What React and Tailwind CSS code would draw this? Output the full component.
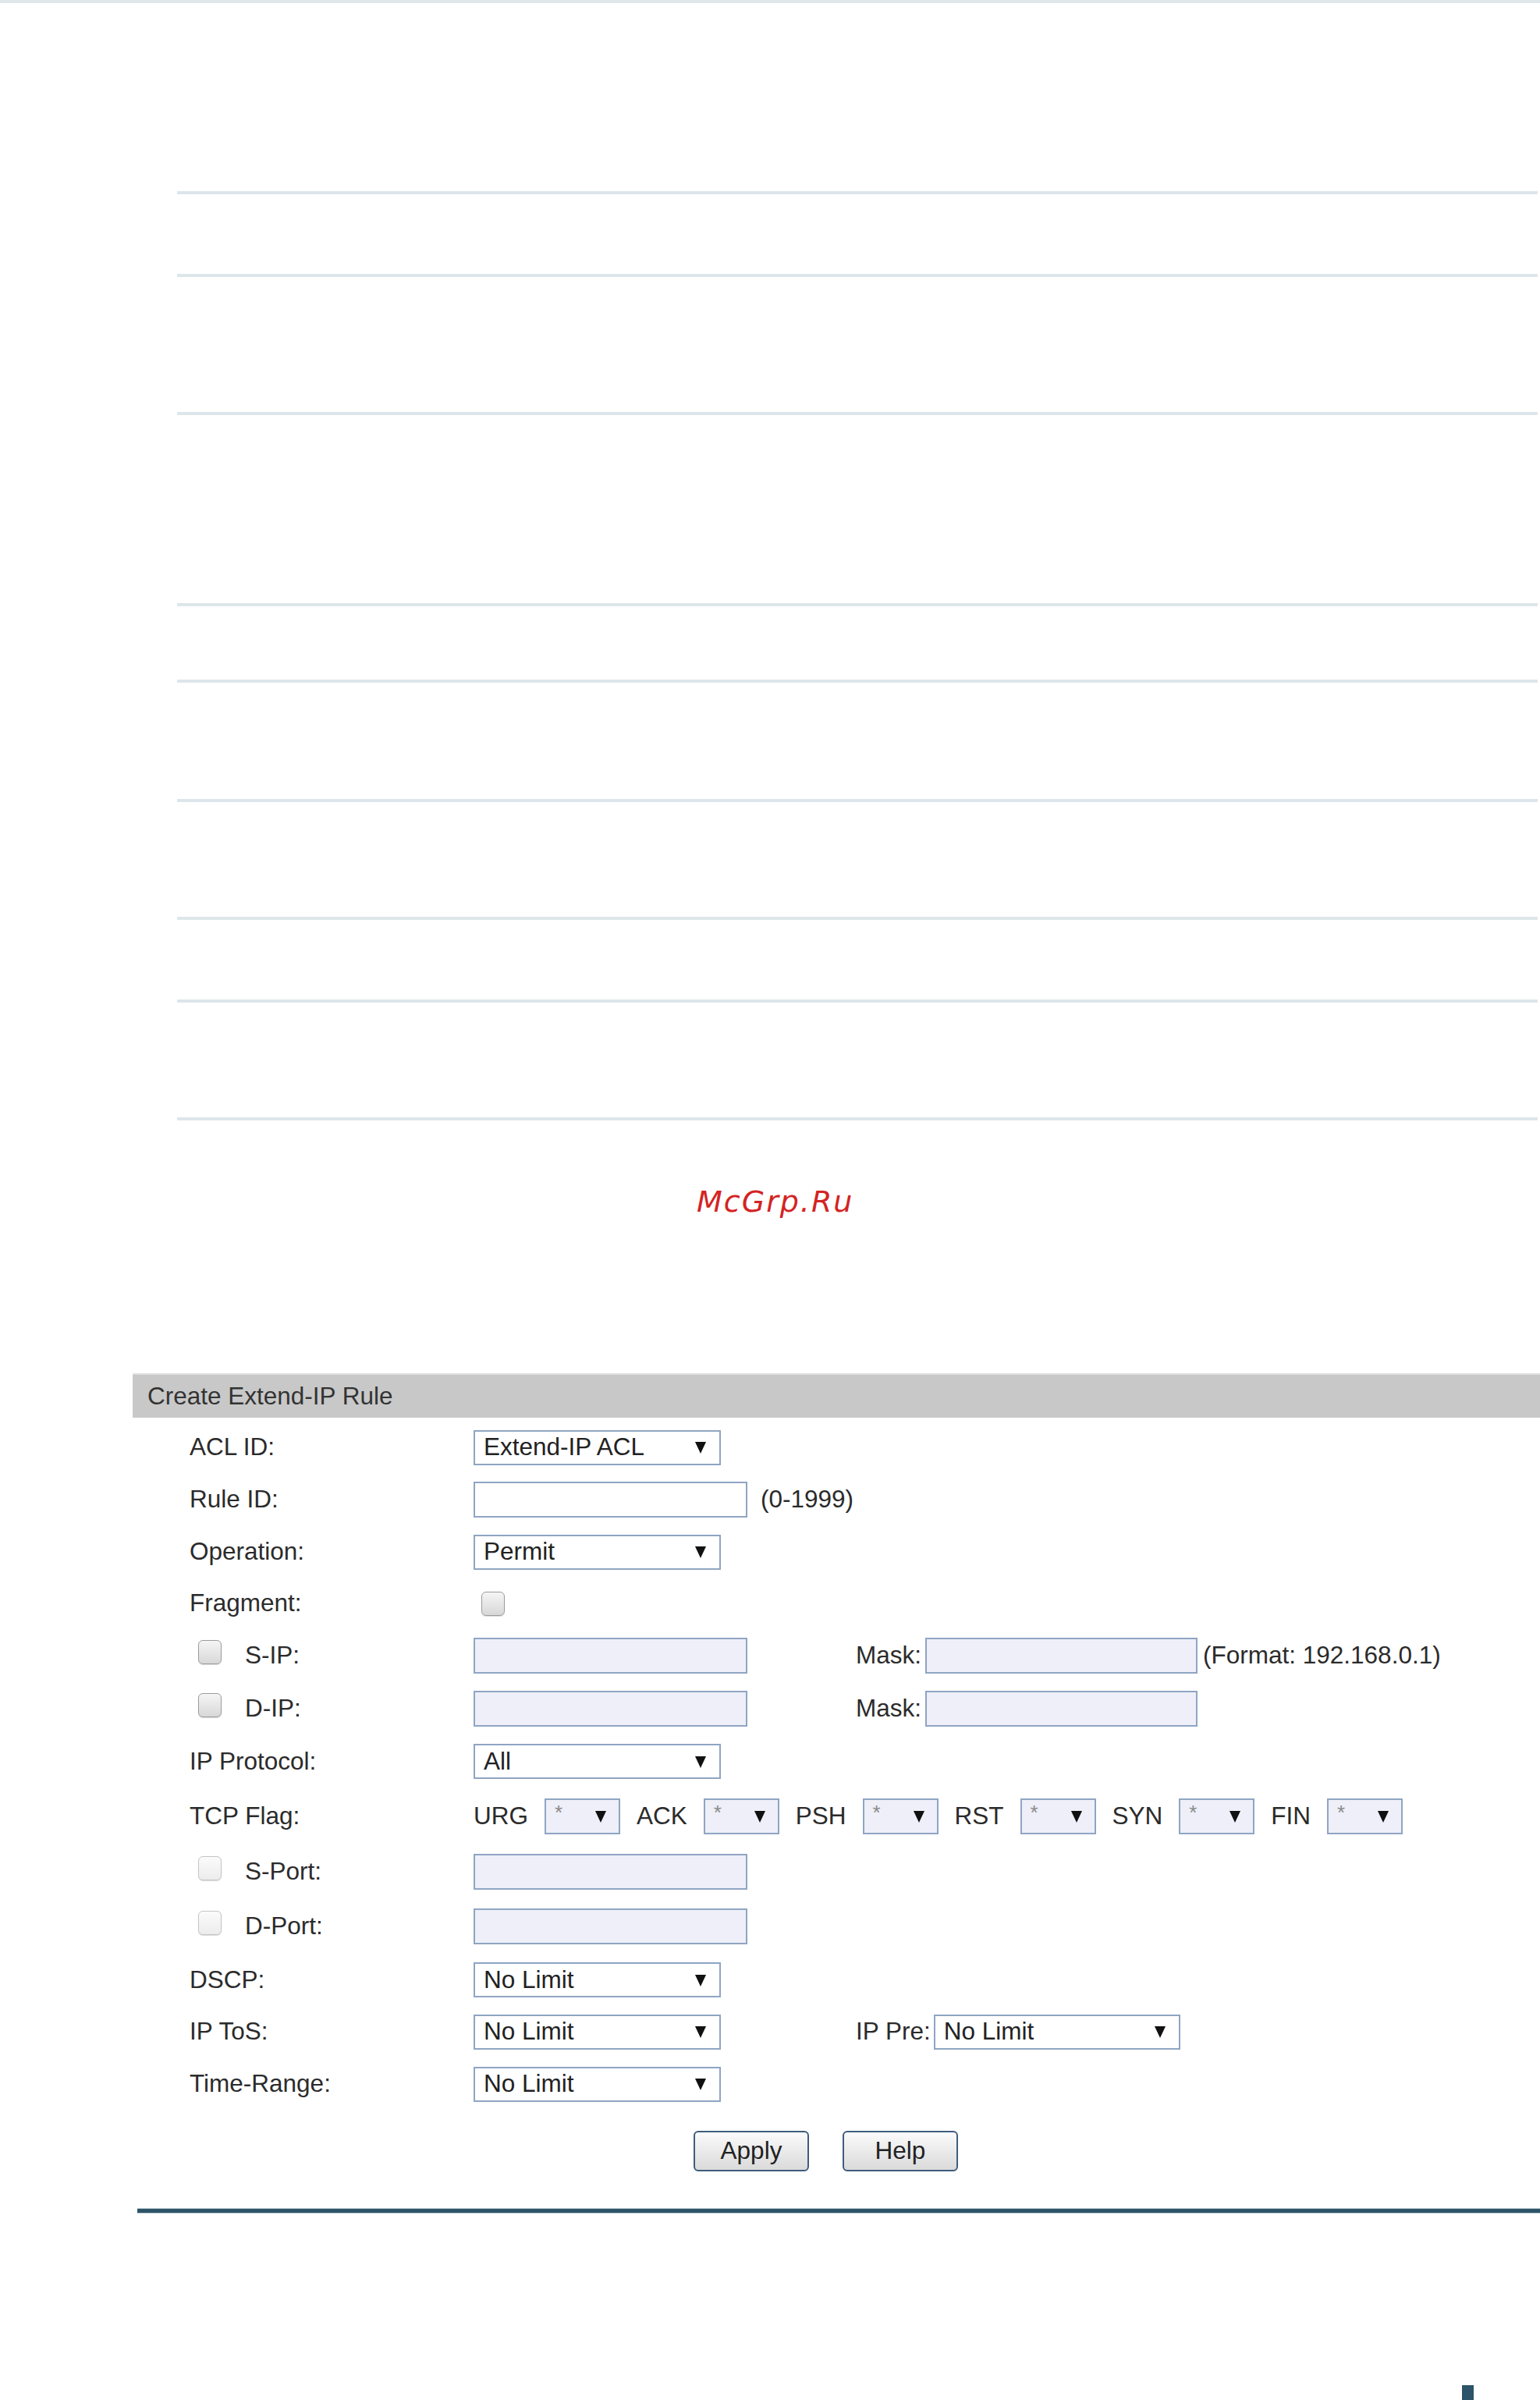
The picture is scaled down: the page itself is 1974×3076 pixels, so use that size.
import React from "react";

const Arrow = () => (
  <svg width="14" height="16" viewBox="0 0 14 16" className="shrink-0">
    <polygon points="0,1 14,1 7,16" fill="#111" />
  </svg>
);

const Select = ({ value, w = "w-[317px]" }) => (
  <div className={`flex items-center justify-between h-[45px] ${w} border-2 border-[#8fa5c3] bg-white pl-[11px] pr-[17px] text-[31.5px] text-[#222] shrink-0`}>
    <span>{value}</span>
    <Arrow />
  </div>
);

const FlagSelect = () => (
  <div className="flex items-center justify-between h-[46px] w-[97px] border-2 border-[#8fa5c3] bg-[#eeeff8] pl-[11px] pr-[16px] shrink-0">
    <span className="text-[26px] text-[#8a8a8a] -mt-[10px]">*</span>
    <Arrow />
  </div>
);

const Input = ({ w = "w-[351px]", bg = "bg-[#eeeff8]" }) => (
  <div className={`h-[46px] ${w} border-2 border-[#8fa5c3] ${bg} shrink-0`} />
);

const Check = ({ light = false, cls = "" }) => (
  <div
    className={`w-[30px] h-[31px] rounded-[6px] border ${light ? "border-[#c4c4c4] from-[#fbfbfb] to-[#ececec]" : "border-[#9c9c9c] from-[#f5f5f5] to-[#d8d8d8]"} bg-linear-to-b shadow-[0_1px_1px_rgba(0,0,0,0.15)] shrink-0 ${cls}`}
  />
);

const Label = ({ children }) => (
  <div className="w-[364px] shrink-0 flex items-center">{children}</div>
);

const CheckLabel = ({ text, light, cls }) => (
  <Label>
    <Check light={light} cls={`ml-[11px] ${cls}`} />
    <span className="ml-[30px]">{text}</span>
  </Label>
);

const Flag = ({ name, first }) => (
  <>
    <span className={first ? "" : "ml-[21px]"}>{name}</span>
    <div className="ml-[21px]">
      <FlagSelect />
    </div>
  </>
);

const Button = ({ children }) => (
  <div className="w-[148px] h-[52px] rounded-[6px] border-2 border-[#3e5d7d] bg-linear-to-b from-[#fbfbfb] to-[#dadada] flex items-center justify-center text-[31.5px] text-[#222]">
    {children}
  </div>
);

const lineTops = [
  "mt-[241px]",
  "mt-[102px]",
  "mt-[173px]",
  "mt-[241px]",
  "mt-[94px]",
  "mt-[149px]",
  "mt-[147px]",
  "mt-[102px]",
  "mt-[147px]",
];

export default function App() {
  return (
    <div className="w-[1974px] h-[3076px] bg-white overflow-hidden font-['Liberation_Sans',Arial,sans-serif] leading-none text-[#2b2b2b]">
      <div className="h-[4px] bg-[#dfe7ea]" />
      {lineTops.map((mt, i) => (
        <div key={i} className={`${mt} ml-[227px] w-[1744px] h-[4px] bg-[#dde6ea]`} />
      ))}

      <div className="mt-[85px] ml-[893px] text-[38px] italic font-['DejaVu_Sans',sans-serif] text-[#d42323] tracking-[2px] leading-none">
        McGrp.Ru
      </div>

      <div className="mt-[201px] ml-[170px]">
        <div className="h-[57px] bg-[#c8c8c8] border-t-2 border-[#e0e0e0] flex items-center pl-[19px] text-[31.5px] text-[#333]">
          Create Extend-IP Rule
        </div>

        <div className="pt-[5px] pl-[73px] text-[31.5px]">
          <div className="flex items-center h-[66px]">
            <Label>ACL ID:</Label>
            <Select value="Extend-IP ACL" />
          </div>
          <div className="flex items-center h-[68px]">
            <Label>Rule ID:</Label>
            <Input bg="bg-white" />
            <span className="ml-[17px]">(0-1999)</span>
          </div>
          <div className="flex items-center h-[66px]">
            <Label>Operation:</Label>
            <Select value="Permit" />
          </div>
          <div className="flex items-center h-[66px]">
            <Label>Fragment:</Label>
            <Check cls="ml-[10px]" />
          </div>
          <div className="flex items-center h-[67px]">
            <CheckLabel text="S-IP:" cls="mb-[8px]" />
            <div className="w-[490px] shrink-0">
              <Input />
            </div>
            <span>Mask:</span>
            <div className="ml-[5px]">
              <Input w="w-[349px]" />
            </div>
            <span className="ml-[7px]">(Format: 192.168.0.1)</span>
          </div>
          <div className="flex items-center h-[69px]">
            <CheckLabel text="D-IP:" cls="mb-[8px]" />
            <div className="w-[490px] shrink-0">
              <Input />
            </div>
            <span>Mask:</span>
            <div className="ml-[5px]">
              <Input w="w-[349px]" />
            </div>
          </div>
          <div className="flex items-center h-[67px]">
            <Label>IP Protocol:</Label>
            <Select value="All" />
          </div>
          <div className="flex items-center h-[73px]">
            <Label>TCP Flag:</Label>
            <Flag name="URG" first />
            <Flag name="ACK" />
            <Flag name="PSH" />
            <Flag name="RST" />
            <Flag name="SYN" />
            <Flag name="FIN" />
          </div>
          <div className="flex items-center h-[70px]">
            <CheckLabel text="S-Port:" light cls="mb-[10px]" />
            <Input />
          </div>
          <div className="flex items-center h-[70px]">
            <CheckLabel text="D-Port:" light cls="mb-[10px]" />
            <Input />
          </div>
          <div className="flex items-center h-[67px]">
            <Label>DSCP:</Label>
            <Select value="No Limit" />
          </div>
          <div className="flex items-center h-[66px]">
            <Label>IP ToS:</Label>
            <div className="w-[490px] shrink-0">
              <Select value="No Limit" />
            </div>
            <span>IP Pre:</span>
            <div className="ml-[4px]">
              <Select value="No Limit" w="w-[316px]" />
            </div>
          </div>
          <div className="flex items-center h-[68px]">
            <Label>Time-Range:</Label>
            <Select value="No Limit" />
          </div>
        </div>

        <div className="mt-[26px] flex pl-[719px] gap-[43px]">
          <Button>Apply</Button>
          <Button>Help</Button>
        </div>

        <div className="mt-[47px] ml-[6px] h-[7px] bg-[#2e5467] border-y border-[#b7c8d1]" />
      </div>

      <div className="mt-[220px] ml-[1874px] w-[15px] h-[19px] bg-[#2d5468]" />
    </div>
  );
}
